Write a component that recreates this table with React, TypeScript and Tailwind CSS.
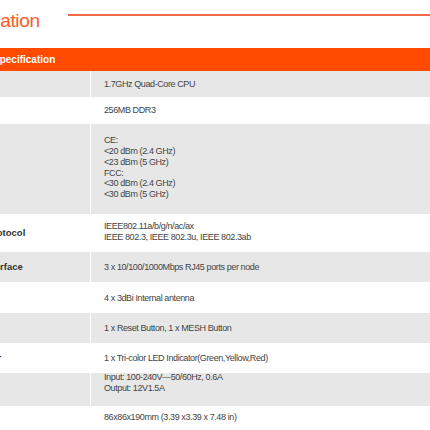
const ROWS = [
  { label: "CPU", value: ["1.7GHz Quad-Core CPU"], h: "h-[26px]", gray: true, pad: "" },
  { label: "Memory", value: ["256MB DDR3"], h: "h-[27px]", gray: false, pad: "" },
  {
    label: "EIRP",
    value: ["CE:", "<20 dBm (2.4 GHz)", "<23 dBm (5 GHz)", "FCC:", "<30 dBm (2.4 GHz)", "<30 dBm (5 GHz)"],
    h: "h-[90px]",
    gray: true,
    pad: "pb-[3px]",
  },
  {
    label: "Wi-Fi Protocol",
    value: ["IEEE802.11a/b/g/n/ac/ax", "IEEE 802.3, IEEE 802.3u, IEEE 802.3ab"],
    h: "h-[38px]",
    gray: false,
    pad: "pb-[2px]",
  },
  { label: "LAN Interface", value: ["3 x 10/100/1000Mbps RJ45 ports per node"], h: "h-[30px]", gray: true, pad: "" },
  { label: "Antenna", value: ["4 x 3dBi Internal antenna"], h: "h-[31px]", gray: false, pad: "pt-[2px]" },
  { label: "Button", value: ["1 x Reset Button, 1 x MESH Button"], h: "h-[30px]", gray: true, pad: "" },
  { label: "Indicator", value: ["1 x Tri-color LED Indicator(Green,Yellow,Red)"], h: "h-[30px]", gray: false, pad: "" },
  { label: "Power", value: ["Input: 100-240V—50/60Hz, 0.6A", "Output: 12V1.5A"], h: "h-[33px]", gray: true, pad: "pb-[13px]" },
  { label: "Size", value: ["86x86x190mm (3.39  x3.39 x 7.48 in)"], h: "h-[30px]", gray: false, pad: "pb-[7px]" },
];

export default function App() {
  return (
    <div className="w-[430px] h-[430px] overflow-hidden bg-white" style={{ fontFamily: '"Liberation Sans", Arial, sans-serif' }}>
      {/* ── Title ───────────────────────────── */}
      <div className="flex items-start h-[48px]">
        <h2 className="-ml-[64px] mt-[11px] text-[19px] leading-[19px] tracking-[-0.3px] text-[#ff5a1f] whitespace-nowrap">
          Specification
        </h2>
        <div className="flex-1 ml-[28px] mt-[14px] h-[2px] bg-[#f06a45]" />
      </div>

      {/* ── Table ───────────────────────────── */}
      <div className="-ml-[60px] w-[490px]">
        <div className="h-[23px] bg-[#ff4b00] flex items-center pl-[53px] text-white font-bold text-[10px]">
          Specification
        </div>
        {ROWS.map((r) => (
          <div key={r.label} className={`flex ${r.h} ${r.gray ? "bg-[#e7e7e7]" : "bg-white"}`}>
            <div className="w-[151px] shrink-0 pl-[21px] flex items-center border-r border-white font-bold text-[9.5px] text-[#333] whitespace-nowrap">
              {r.label}
            </div>
            <div className={`flex-1 pl-[13px] flex flex-col justify-center text-[9px] leading-[10.8px] tracking-[-0.4px] text-[#444] whitespace-nowrap ${r.pad}`}>
              {r.value.map((v, i) => (
                <span key={i}>{v}</span>
              ))}
            </div>
          </div>
        ))}
      </div>
    </div>
  );
}
